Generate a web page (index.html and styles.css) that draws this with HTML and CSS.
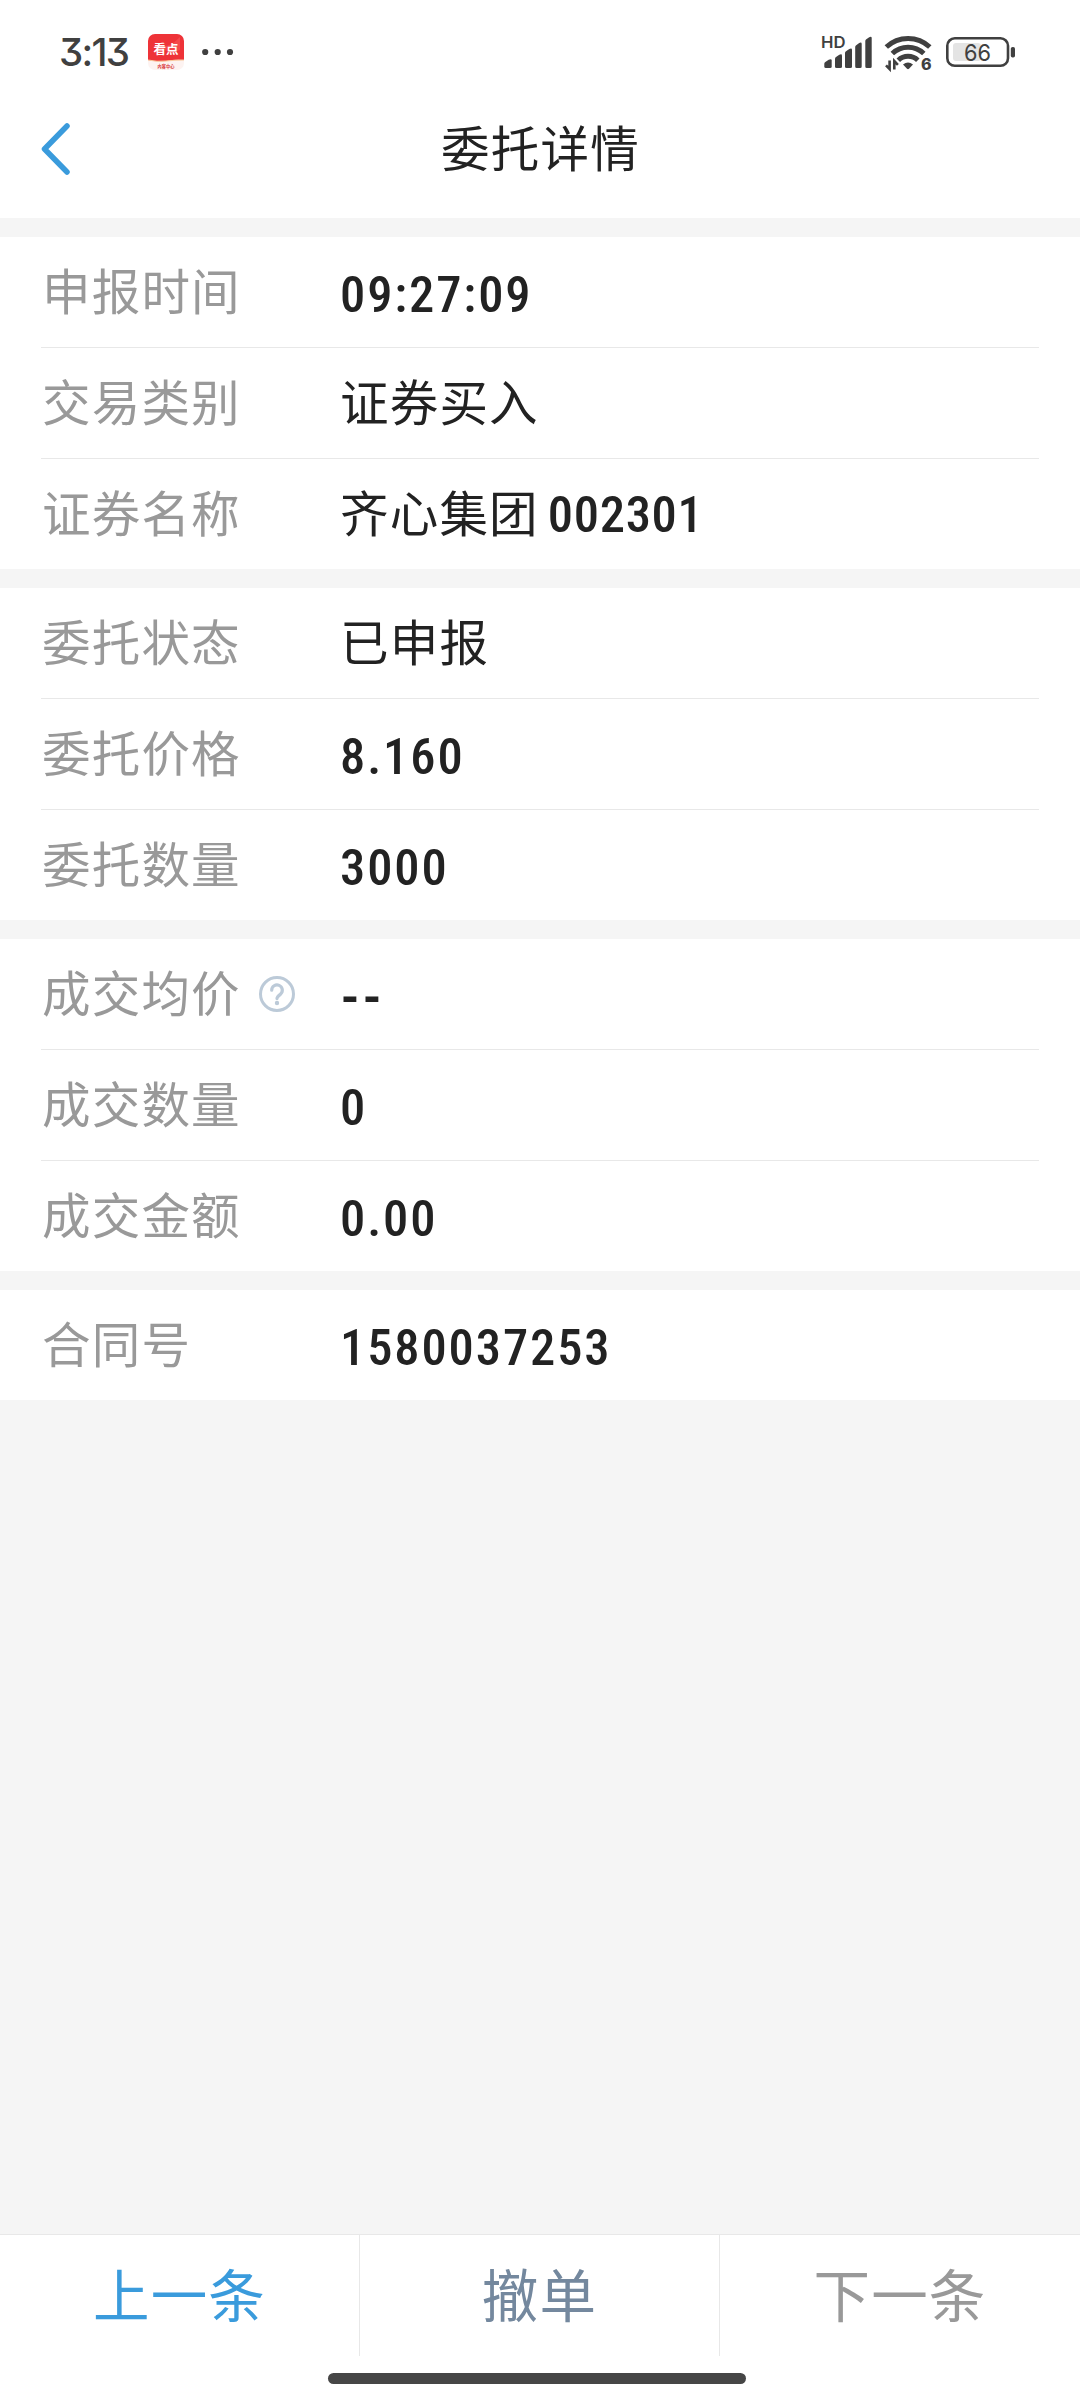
FILE: index.html
```html
<!DOCTYPE html>
<html lang="zh-CN">
<head>
  <meta charset="UTF-8">
  <title>委托详情</title>
  <link rel="stylesheet" href="styles.css">
</head>
<body>
  <header class="header">
    <div class="status-bar">
      <span class="time">3:13</span>
      <svg class="app-icon" width="36" height="36" viewBox="0 0 36 36">
        <rect width="36" height="36" rx="7" fill="#fdf3f1"/>
        <path d="M0 26V7a7 7 0 0 1 7-7h22a7 7 0 0 1 7 7v19q-8-1-18 1-10 1-18-1z" fill="#ee3338"/>
        <path d="M4 5q12 15 28-2v13q-14 7-28-11z" fill="#f5484b"/>
        <path d="M0 26q9 2 18 1t18-1" fill="none" stroke="#f9c99b" stroke-width="1"/>
        <text x="18" y="20" text-anchor="middle" font-size="12.5" font-weight="700" fill="#fff">看点</text>
        <text x="18" y="33.5" text-anchor="middle" font-size="4.2" font-weight="700" fill="#d8343a">内容中心</text>
      </svg>
      <svg class="dots" width="32" height="8" viewBox="0 0 32 8">
        <circle cx="3.2" cy="4" r="3.1"/>
        <circle cx="15.7" cy="4" r="3.1"/>
        <circle cx="28" cy="4" r="3.1"/>
      </svg>

      <svg class="signal" width="52" height="40" viewBox="0 -2 52 40">
        <text x="-1" y="14" font-size="16" font-weight="600" textLength="24.500" lengthAdjust="spacingAndGlyphs">HD</text>
        <path d="M2.300 32.500v-2.700q0-1 1-1.800l3.400-2.200q3-1.200 3 .8v5.900q0 1.500-1.500 1.500H3.800q-1.500 0-1.500-1.500z"/>
        <path d="M13 24.800q0-1 1-1.700l3.300-2.300q2.700-1.300 2.700.9v10.800q0 1.500-1.500 1.500h-4q-1.500 0-1.500-1.500z"/>
        <path d="M23 19q0-1 1-1.800l3.300-2.300q2.700-1.300 2.700.9v16.700q0 1.500-1.500 1.500h-4q-1.500 0-1.500-1.500z"/>
        <path d="M33.200 13q0-1 1-1.700l3-2.200q2.500-1.300 2.500.9v22.500q0 1.500-1.500 1.500h-3.500q-1.500 0-1.500-1.500z"/>
        <path d="M43.300 7q0-1 1-1.700l2.900-2.100q2.500-1.300 2.500.9v28.400q0 1.500-1.500 1.500h-3.400q-1.500 0-1.500-1.500z"/>
      </svg>
      <svg class="wifi" width="48" height="40" viewBox="1 -2 48 40">
        <g fill="none" stroke="#404040" stroke-width="5">
          <path d="M2.300 13a32 32 0 0 1 43.500 0"/>
          <path d="M8.300 19.500a23 23 0 0 1 31.500 0"/>
          <path d="M14.300 26.200a14 14 0 0 1 19.500 0"/>
        </g>
        <path d="M19 30.500q5-4 10 0l-4 4.300q-1 .9-2 0z"/>
        <path d="M5.600 26.500V35L2 31.300M10.300 35.500v-8.500l3.600 3.800" fill="none" stroke="#404040" stroke-width="2.600"/>
        <text x="37" y="35.500" font-size="16" font-weight="800">6</text>
      </svg>
      <svg class="battery" width="70" height="32" viewBox="0 0 70 32">
        <rect x="7" y="7" width="28" height="18" rx="3" fill="#e4e4e4"/>
        <rect x="1.300" y="2.300" width="60.700" height="27.500" rx="7.500" fill="none" stroke="#404040" stroke-width="2.600"/>
        <rect x="64.800" y="11" width="4.200" height="10.500" rx="1.800"/>
        <text x="31.500" y="24.700" text-anchor="middle" font-size="23.500" textLength="27" lengthAdjust="spacingAndGlyphs">66</text>
      </svg>
    </div>
    <div class="nav">
      <svg class="back" width="30" height="52" viewBox="0 0 30 52">
        <path d="M26 3L3.500 26 26 49" fill="none" stroke="#3a9bdc" stroke-width="5.500" stroke-linecap="round" stroke-linejoin="round"/>
      </svg>
      <h1>委托详情</h1>
    </div>
  </header>

  <main class="content">
    <section class="group">
      <div class="row">
        <span class="label">申报时间</span>
        <span class="value num">09:27:09</span>
      </div>
      <div class="row">
        <span class="label">交易类别</span>
        <span class="value">证券买入</span>
      </div>
      <div class="row">
        <span class="label">证券名称</span>
        <span class="value">齐心集团<span class="num code">002301</span></span>
      </div>
    </section>

    <section class="group">
      <div class="row">
        <span class="label">委托状态</span>
        <span class="value">已申报</span>
      </div>
      <div class="row">
        <span class="label">委托价格</span>
        <span class="value num">8.160</span>
      </div>
      <div class="row">
        <span class="label">委托数量</span>
        <span class="value num">3000</span>
      </div>
    </section>

    <section class="group">
      <div class="row">
        <span class="label">成交均价
          <svg class="help" width="36" height="36" viewBox="0 0 36 36">
            <circle cx="18" cy="18" r="16.500" stroke-width="3"/>
            <path d="M12.700 14.200a5.300 5.300 0 1 1 8.900 3.900q-3.600 2.700-3.600 4.500" stroke-width="3.200" stroke-linecap="round"/>
            <circle cx="18" cy="27" r="1.100" stroke-width="2.200"/>
          </svg>
        </span>
        <span class="value num empty">--</span>
      </div>
      <div class="row">
        <span class="label">成交数量</span>
        <span class="value num">0</span>
      </div>
      <div class="row">
        <span class="label">成交金额</span>
        <span class="value num">0.00</span>
      </div>
    </section>

    <section class="group">
      <div class="row">
        <span class="label">合同号</span>
        <span class="value num">1580037253</span>
      </div>
    </section>
  </main>

  <footer class="footer">
    <div class="actions">
      <button class="prev">上一条</button>
      <button class="cancel">撤单</button>
      <button class="next">下一条</button>
    </div>
    <div class="home-bar"></div>
  </footer>
</body>
</html>
```
FILE: styles.css
```css
* {
  box-sizing: border-box;
}

body {
  margin: 0;
  height: 2400px;
  display: flex;
  flex-direction: column;
  background-color: #f5f5f5;
  color: #222;
  font-family: "Noto Sans CJK SC", sans-serif;
}

svg {
  display: block;
  flex: none;
  overflow: visible;
  fill: #404040;
}

.header {
  height: 218px;
  background-color: #fff;
}

.status-bar {
  height: 80px;
  padding: 24px 64px 0 59px;
  display: flex;
  align-items: center;
}

.status-bar text {
  font-family: Inter, "Noto Sans CJK SC", sans-serif;
}

.time {
  width: 89px;
  font-family: Inter, sans-serif;
  font-size: 38.5px;
  font-weight: 500;
  font-feature-settings: "cv09";
  line-height: 56px;
  letter-spacing: -1.7px;
  color: #404040;
}

.dots {
  margin-left: 18px;
}

.signal {
  margin-left: auto;
}

.wifi {
  margin-left: 11px;
}

.battery {
  margin-left: 13px;
}

.nav {
  position: relative;
  height: 138px;
  display: flex;
  align-items: center;
  justify-content: center;
}

.back {
  position: absolute;
  left: 41px;
}

h1 {
  margin: 0;
  padding: 0 0 7px 1px;
  font-size: 48.5px;
  font-weight: 400;
  letter-spacing: 1.2px;
}

.content {
  flex: 1;
}

.group {
  margin-top: 19px;
  padding: 0 41px;
  background-color: #fff;
}

.row {
  height: 110px;
  display: flex;
  align-items: center;
  font-size: 48.5px;
  line-height: 72px;
  letter-spacing: 1.2px;
}

.row + .row {
  height: 111px;
  border-top: 1px solid #e8e8e8;
}

.label,
.value {
  padding-bottom: 7px;
}

.label {
  width: 299px;
  padding-left: 1px;
  display: flex;
  align-items: center;
  color: #999;
}

.help {
  margin: 7px 0 0 18px;
  fill: none;
  stroke: #bccad8;
}

.num {
  padding: 5px 0 0;
  font-family: "Roboto Condensed", Roboto, sans-serif;
  font-stretch: 75%;
  font-size: 50.5px;
  font-weight: 500;
  letter-spacing: 1.9px;
}

.empty {
  padding-left: 1px;
  font-size: 58px;
  letter-spacing: 4px;
}

/* keeps the digits from stretching the line */
.code {
  margin-left: 9px;
  line-height: 0;
  letter-spacing: 0.7px;
}

.footer {
  height: 166px;
  border-top: 1px solid #e8e8e8;
  background-color: #fff;
}

.actions {
  display: grid;
  grid-template-columns: repeat(3, 1fr);
  height: 121px;
}

.actions button {
  border: none;
  border-right: 1px solid #e8e8e8;
  padding: 0 0 8px;
  background: none;
  font-family: inherit;
  font-size: 56.5px;
  letter-spacing: 1.2px;
}

.actions .prev {
  color: #3a9bdc;
}

.actions .cancel {
  color: #74889e;
}

.actions .next {
  border-right: none;
  color: #999;
}

.home-bar {
  width: 418px;
  height: 11px;
  margin: 17px 0 0 328px;
  border-radius: 6px;
  background-color: #464646;
}
```
